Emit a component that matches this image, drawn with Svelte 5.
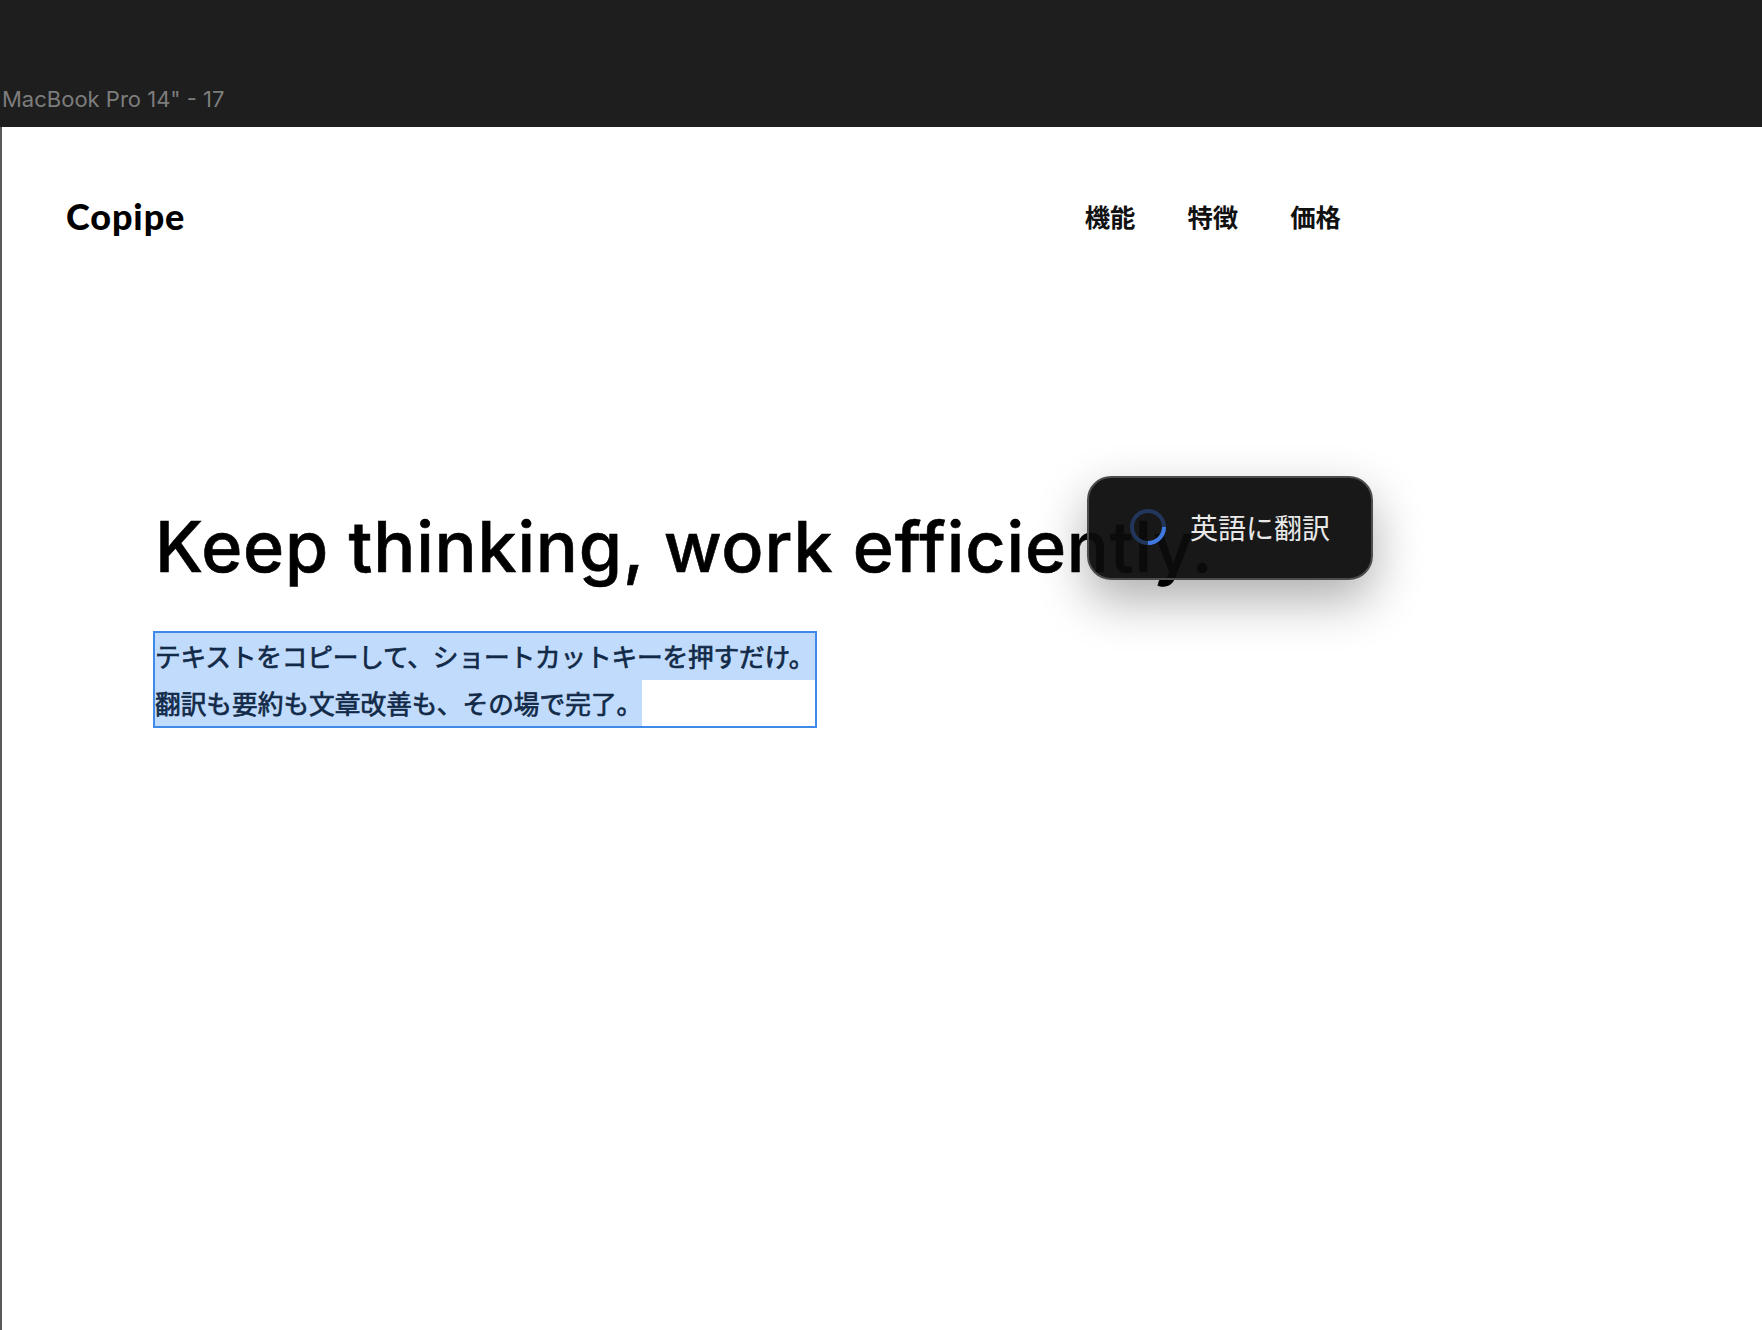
<script>
	const navItems = ['機能', '特徴', '価格'];
	const selectedLines = ['テキストをコピーして、ショートカットキーを押すだけ。', '翻訳も要約も文章改善も、その場で完了。'];
</script>

<div class="topbar">
	<span class="frame-name">MacBook Pro 14" - 17</span>
</div>

<main class="frame">
	<header class="nav">
		<span class="logo">Copipe</span>
		<nav class="links">
			{#each navItems as item}
				<span>{item}</span>
			{/each}
		</nav>
	</header>

	<section class="hero">
		<h1>Keep thinking, work efficiently.</h1>
		<div class="selection">
			{#each selectedLines as line}
				<p><span>{line}</span></p>
			{/each}
		</div>
	</section>

	<div class="toolbar">
		<svg class="spinner" width="38" height="38" viewBox="0 0 38 38">
			<circle cx="19" cy="19" r="16" fill="none" stroke="#22365c" stroke-width="4" />
			<path d="M35 19A16 16 0 0 1 19 35" fill="none" stroke="#3f78e0" stroke-width="4" />
		</svg>
		<span>英語に翻訳</span>
	</div>
</main>

<style>
	:global(body) {
		background: #fff;
		font-family: Inter, "Noto Sans CJK JP", sans-serif;
	}

	.topbar {
		height: 127px;
		background: #1e1e1e;
		display: flex;
		align-items: flex-end;
		box-sizing: border-box;
		padding: 0 0 15px 2px;
	}

	.frame-name {
		font-family: Inter, sans-serif;
		font-size: 22px;
		line-height: 26px;
		color: #7d7d7d;
	}

	.frame {
		position: relative;
		height: 1203px;
		box-sizing: border-box;
		border-left: 2px solid #5a5a5a;
		background: #fff;
		overflow: hidden;
	}

	.nav {
		display: flex;
		justify-content: space-between;
		align-items: center;
		width: 1339px;
		box-sizing: border-box;
		padding: 61px 0 0 64px;
		height: 116px;
	}

	.logo {
		font-family: Lato, sans-serif;
		font-weight: 900;
		font-size: 36px;
		letter-spacing: 0.9px;
		line-height: 44px;
		color: #000;
	}

	.links {
		display: flex;
		gap: 52px;
		font-family: "Noto Sans CJK JP", sans-serif;
		font-weight: 700;
		font-size: 25.4px;
		line-height: 36px;
		color: #111;
	}

	.hero {
		padding: 259px 0 0 153px;
	}

	h1 {
		margin: 0;
		font-family: Inter, sans-serif;
		font-weight: 500;
		font-size: 70px;
		letter-spacing: 0.8px;
		line-height: 90px;
		color: #000;
		white-space: nowrap;
		-webkit-text-stroke: 0.6px #000;
	}

	.selection {
		width: 664px;
		box-sizing: border-box;
		margin: 39px 0 0 -2px;
		border: 2px solid #3f8ae8;
	}

	.selection p {
		margin: 0;
		height: 46.5px;
		font-family: "Noto Sans CJK JP", sans-serif;
		font-weight: 400;
		font-size: 25.7px;
		line-height: 46px;
		color: #122a48;
		white-space: nowrap;
		-webkit-text-stroke: 0.7px #122a48;
	}

	.selection span {
		display: inline-block;
		background: #c0dbfb;
		height: 100%;
	}

	.selection p:first-child span {
		display: block;
		letter-spacing: -0.17px;
	}

	.toolbar {
		position: absolute;
		left: 1085px;
		top: 349px;
		width: 286px;
		height: 104px;
		box-sizing: border-box;
		display: flex;
		align-items: center;
		gap: 23px;
		padding: 0 0 2px 40px;
		border: 2px solid #4d4d4d;
		border-radius: 24px;
		background: rgba(12, 12, 12, 0.95);
		box-shadow: 0 20px 50px rgba(0, 0, 0, 0.32);
		font-family: "Noto Sans CJK JP", sans-serif;
		font-size: 28px;
		color: #e8e8e8;
	}
</style>
